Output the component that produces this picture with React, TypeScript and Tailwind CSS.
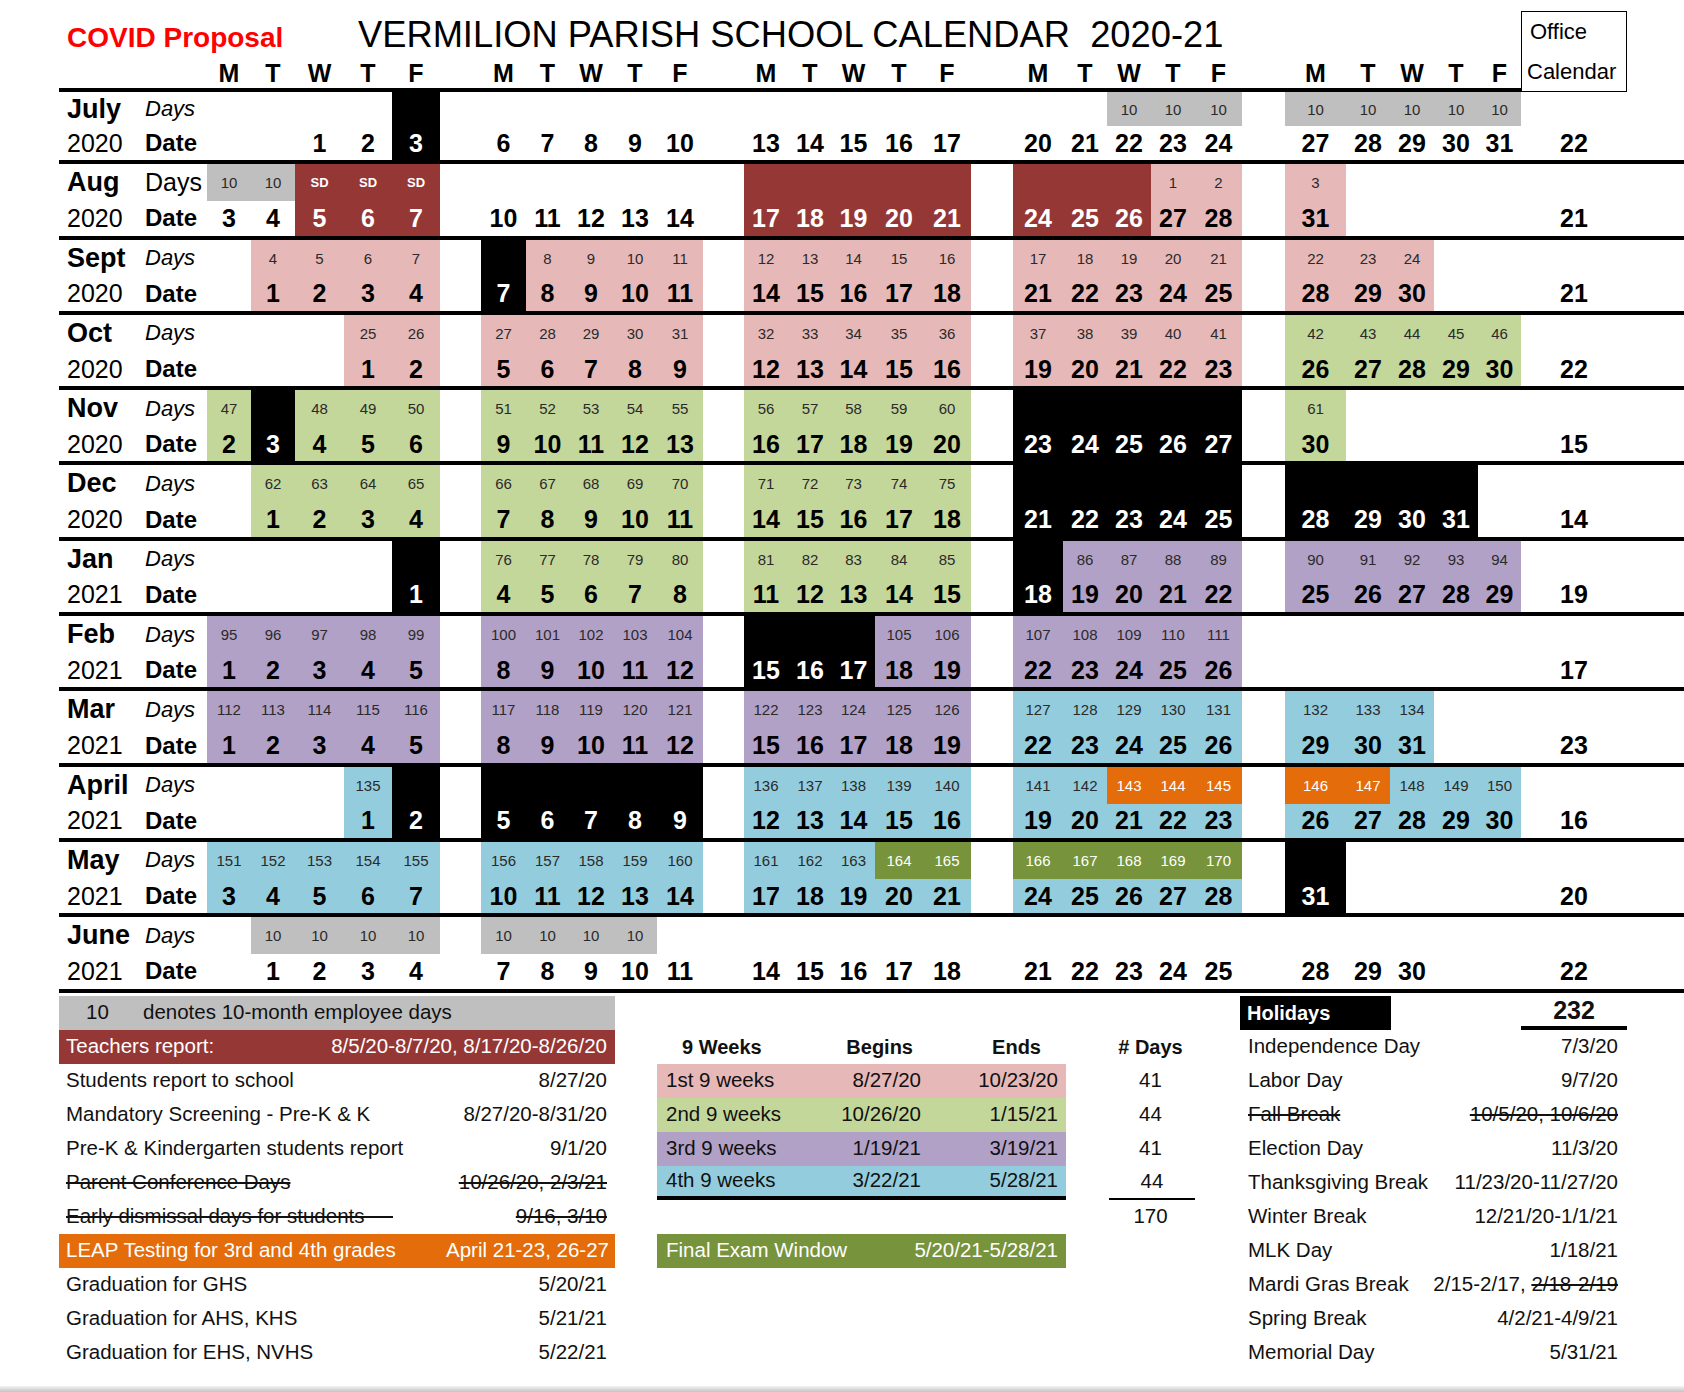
import React from 'react'

// colour keys used in the month strings
const BG: Record<string, string> = {
  '.': 'bg-white',
  k: 'bg-black',
  r: 'bg-[#953735]',
  p: 'bg-[#e6b9b8]',
  g: 'bg-[#c4d79b]',
  u: 'bg-[#b2a1c7]',
  b: 'bg-[#93cddd]',
  o: 'bg-[#e46c0a]',
  v: 'bg-[#77933c]',
  y: 'bg-[#bfbfbf]',
}
const DARK = 'krov'

const CW = [
  'w-[44px]', 'w-[44px]', 'w-[49px]', 'w-[48px]', 'w-[48px]',
  'w-[45px]', 'w-[43px]', 'w-[44px]', 'w-[44px]', 'w-[46px]',
  'w-[44px]', 'w-[44px]', 'w-[43px]', 'w-[48px]', 'w-[48px]',
  'w-[50px]', 'w-[44px]', 'w-[44px]', 'w-[44px]', 'w-[47px]',
  'w-[61px]', 'w-[44px]', 'w-[44px]', 'w-[44px]', 'w-[43px]',
]
const GAPS = ['w-[41px]', 'w-[41px]', 'w-[42px]', 'w-[43px]']

const cols = (s: string) => s.replace(/\s/g, '')
const parse = (s: string) =>
  s.split(/\s+/).filter(x => x && x !== '/').map(x => (x === '-' ? '' : x))

type Month = {
  name: string
  year: string
  upright?: boolean
  office: string
  dc: string
  dt: string
  ac?: string
  at: string
}

const MONTHS: Month[] = [
  {
    name: 'July', year: '2020', office: '22',
    dc: '....k ..... ..... ..yyy yyyyy',
    dt: '- - - - - / - - - - - / - - - - - / - - 10 10 10 / 10 10 10 10 10',
    ac: '....k ..... ..... ..... .....',
    at: '- - 1 2 3 / 6 7 8 9 10 / 13 14 15 16 17 / 20 21 22 23 24 / 27 28 29 30 31',
  },
  {
    name: 'Aug', year: '2020', office: '21', upright: true,
    dc: 'yyrrr ..... rrrrr rrrpp p....',
    dt: '10 10 SD SD SD / - - - - - / - - - - - / - - - 1 2 / 3 - - - -',
    ac: '..rrr ..... rrrrr rrrpp p....',
    at: '3 4 5 6 7 / 10 11 12 13 14 / 17 18 19 20 21 / 24 25 26 27 28 / 31 - - - -',
  },
  {
    name: 'Sept', year: '2020', office: '21',
    dc: '.pppp kpppp ppppp ppppp ppp..',
    dt: '- 4 5 6 7 / - 8 9 10 11 / 12 13 14 15 16 / 17 18 19 20 21 / 22 23 24 - -',
    at: '- 1 2 3 4 / 7 8 9 10 11 / 14 15 16 17 18 / 21 22 23 24 25 / 28 29 30 - -',
  },
  {
    name: 'Oct', year: '2020', office: '22',
    dc: '...pp ppppp ppppp ppppp ggggg',
    dt: '- - - 25 26 / 27 28 29 30 31 / 32 33 34 35 36 / 37 38 39 40 41 / 42 43 44 45 46',
    at: '- - - 1 2 / 5 6 7 8 9 / 12 13 14 15 16 / 19 20 21 22 23 / 26 27 28 29 30',
  },
  {
    name: 'Nov', year: '2020', office: '15',
    dc: 'gkggg ggggg ggggg kkkkk g....',
    dt: '47 - 48 49 50 / 51 52 53 54 55 / 56 57 58 59 60 / - - - - - / 61 - - - -',
    at: '2 3 4 5 6 / 9 10 11 12 13 / 16 17 18 19 20 / 23 24 25 26 27 / 30 - - - -',
  },
  {
    name: 'Dec', year: '2020', office: '14',
    dc: '.gggg ggggg ggggg kkkkk kkkk.',
    dt: '- 62 63 64 65 / 66 67 68 69 70 / 71 72 73 74 75 / - - - - - / - - - - -',
    at: '- 1 2 3 4 / 7 8 9 10 11 / 14 15 16 17 18 / 21 22 23 24 25 / 28 29 30 31 -',
  },
  {
    name: 'Jan', year: '2021', office: '19',
    dc: '....k ggggg ggggg kuuuu uuuuu',
    dt: '- - - - - / 76 77 78 79 80 / 81 82 83 84 85 / - 86 87 88 89 / 90 91 92 93 94',
    at: '- - - - 1 / 4 5 6 7 8 / 11 12 13 14 15 / 18 19 20 21 22 / 25 26 27 28 29',
  },
  {
    name: 'Feb', year: '2021', office: '17',
    dc: 'uuuuu uuuuu kkkuu uuuuu .....',
    dt: '95 96 97 98 99 / 100 101 102 103 104 / - - - 105 106 / 107 108 109 110 111 / - - - - -',
    at: '1 2 3 4 5 / 8 9 10 11 12 / 15 16 17 18 19 / 22 23 24 25 26 / - - - - -',
  },
  {
    name: 'Mar', year: '2021', office: '23',
    dc: 'uuuuu uuuuu uuuuu bbbbb bbb..',
    dt: '112 113 114 115 116 / 117 118 119 120 121 / 122 123 124 125 126 / 127 128 129 130 131 / 132 133 134 - -',
    at: '1 2 3 4 5 / 8 9 10 11 12 / 15 16 17 18 19 / 22 23 24 25 26 / 29 30 31 - -',
  },
  {
    name: 'April', year: '2021', office: '16',
    dc: '...bk kkkkk bbbbb bbooo oobbb',
    dt: '- - - 135 - / - - - - - / 136 137 138 139 140 / 141 142 143 144 145 / 146 147 148 149 150',
    ac: '...bk kkkkk bbbbb bbbbb bbbbb',
    at: '- - - 1 2 / 5 6 7 8 9 / 12 13 14 15 16 / 19 20 21 22 23 / 26 27 28 29 30',
  },
  {
    name: 'May', year: '2021', office: '20',
    dc: 'bbbbb bbbbb bbbvv vvvvv k....',
    dt: '151 152 153 154 155 / 156 157 158 159 160 / 161 162 163 164 165 / 166 167 168 169 170 / - - - - -',
    ac: 'bbbbb bbbbb bbbbb bbbbb k....',
    at: '3 4 5 6 7 / 10 11 12 13 14 / 17 18 19 20 21 / 24 25 26 27 28 / 31 - - - -',
  },
  {
    name: 'June', year: '2021', office: '22',
    dc: '.yyyy yyyy. ..... ..... .....',
    dt: '- 10 10 10 10 / 10 10 10 10 - / - - - - - / - - - - - / - - - - -',
    ac: '..... ..... ..... ..... .....',
    at: '- 1 2 3 4 / 7 8 9 10 11 / 14 15 16 17 18 / 21 22 23 24 25 / 28 29 30 - -',
  },
]

function Cells({ colors, texts, big }: { colors: string; texts: string[]; big: boolean }) {
  const out: React.ReactNode[] = []
  for (let w = 0; w < 5; w++) {
    for (let d = 0; d < 5; d++) {
      const i = w * 5 + d
      const c = colors[i] ?? '.'
      const dark = DARK.includes(c)
      const t = texts[i] ?? ''
      let txt = big ? 'text-[25px] font-bold' : 'text-[15px]'
      if (t === 'SD') txt = 'text-[13px] font-bold'
      const fg = dark ? 'text-white' : big ? 'text-black' : 'text-[#2a2a2a]'
      out.push(
        <div key={i} className={`${CW[i]} ${BG[c]} ${txt} ${fg} flex items-center justify-center leading-none`}>
          {t}
        </div>
      )
    }
    if (w < 4) out.push(<div key={`g${w}`} className={GAPS[w]} />)
  }
  return <>{out}</>
}

function MonthBlock({ m, first }: { m: Month; first: boolean }) {
  const dc = cols(m.dc)
  const ac = cols(m.ac ?? m.dc)
  return (
    <div className="border-b-4 border-black">
      <div className={`flex ${first ? 'h-[34px]' : 'h-[37px]'}`}>
        <div className="w-[86px] pl-[8px] flex items-center text-[27px] font-bold leading-none">{m.name}</div>
        <div className={`w-[62px] flex items-center leading-none ${m.upright ? 'text-[25px]' : 'text-[22px] italic'}`}>
          Days
        </div>
        <Cells colors={dc} texts={parse(m.dt)} big={false} />
        <div className="w-[106px]" />
      </div>
      <div className="flex h-[34.3px]">
        <div className="w-[86px] pl-[8px] flex items-center text-[25px] leading-none">{m.year}</div>
        <div className="w-[62px] flex items-center text-[24px] font-bold leading-none">Date</div>
        <Cells colors={ac} texts={parse(m.at)} big={true} />
        <div className="w-[106px] flex items-center justify-center text-[25px] font-bold leading-none">{m.office}</div>
      </div>
    </div>
  )
}

function HeaderLetters() {
  const out: React.ReactNode[] = []
  const L = ['M', 'T', 'W', 'T', 'F']
  for (let w = 0; w < 5; w++) {
    for (let d = 0; d < 5; d++) {
      const i = w * 5 + d
      out.push(
        <div key={i} className={`${CW[i]} flex items-center justify-center`}>
          {L[d]}
        </div>
      )
    }
    if (w < 4) out.push(<div key={`g${w}`} className={GAPS[w]} />)
  }
  return <>{out}</>
}

function LRow({ left, right, className = '' }: { left: React.ReactNode; right?: React.ReactNode; className?: string }) {
  return (
    <div className={`h-[34px] flex items-center justify-between pl-[7px] pr-[8px] ${className}`}>
      <span>{left}</span>
      <span>{right}</span>
    </div>
  )
}

function NineRow({ label, begins, ends, className }: { label: string; begins: string; ends: string; className: string }) {
  return (
    <div className={`h-[34px] flex items-center ${className}`}>
      <div className="w-[170px] pl-[9px]">{label}</div>
      <div className="w-[94px] text-right">{begins}</div>
      <div className="flex-1 text-right pr-[8px]">{ends}</div>
    </div>
  )
}

const HOLIDAYS: [React.ReactNode, React.ReactNode][] = [
  ['Independence Day', '7/3/20'],
  ['Labor Day', '9/7/20'],
  [<span className="line-through">Fall Break</span>, <span className="line-through">10/5/20, 10/6/20</span>],
  ['Election Day', '11/3/20'],
  ['Thanksgiving Break', '11/23/20-11/27/20'],
  ['Winter Break', '12/21/20-1/1/21'],
  ['MLK Day', '1/18/21'],
  ['Mardi Gras Break', <>2/15-2/17, <span className="line-through">2/18-2/19</span></>],
  ['Spring Break', '4/2/21-4/9/21'],
  ['Memorial Day', '5/31/21'],
]

export default function App() {
  return (
    <div className="w-[1684px] h-[1392px] bg-white text-black font-['Liberation_Sans',Arial,sans-serif] flex flex-col overflow-hidden">
      <div className="pl-[59px] flex-1">
        {/* Title + weekday header */}
        <div className="flex">
          <div className="w-[1462px]">
            <div className="h-[56px] flex items-baseline pt-[17px] leading-none">
              <div className="w-[299px] pl-[8px] text-[28px] font-bold text-[#ff0000]">COVID Proposal</div>
              <div className="text-[36.3px] whitespace-pre">VERMILION PARISH SCHOOL CALENDAR  2020-21</div>
            </div>
            <div className="h-[36px] flex items-center pt-[2px] border-b-4 border-black text-[25px] font-bold leading-none">
              <div className="w-[148px]" />
              <HeaderLetters />
            </div>
          </div>
          <div className="w-[106px] mt-[11px] h-[81px] border-[1.5px] border-black flex flex-col justify-center pl-[5px] text-[22px] leading-[40px]">
            <div className="pl-[3px]">Office</div>
            <div>Calendar</div>
          </div>
        </div>

        {/* Months */}
        <div>
          {MONTHS.map((m, i) => (
            <MonthBlock key={m.name} m={m} first={i === 0} />
          ))}
        </div>

        {/* Legend */}
        <div className="flex mt-[3px] text-[20.5px] leading-none">
          <div className="w-[556px] text-[#111]">
            <div className="h-[34px] flex items-center bg-[#bfbfbf]">
              <span className="w-[84px] pl-[27px]">10</span>
              <span>denotes 10-month employee days</span>
            </div>
            <LRow className="bg-[#953735] text-white" left="Teachers report:" right="8/5/20-8/7/20, 8/17/20-8/26/20" />
            <LRow left="Students report to school" right="8/27/20" />
            <LRow left="Mandatory Screening - Pre-K & K" right="8/27/20-8/31/20" />
            <LRow left="Pre-K & Kindergarten students report" right="9/1/20" />
            <LRow
              left={<span className="line-through">Parent Conference Days</span>}
              right={<span className="line-through">10/26/20, 2/3/21</span>}
            />
            <LRow
              left={<span className="line-through">Early dismissal days for students&nbsp;&nbsp;&nbsp;&nbsp;&nbsp;</span>}
              right={<span className="line-through">9/16, 3/10</span>}
            />
            <LRow className="bg-[#e46c0a] text-white !pr-[6px]" left="LEAP Testing for 3rd and 4th grades" right="April 21-23, 26-27" />
            <LRow left="Graduation for GHS" right="5/20/21" />
            <LRow left="Graduation for AHS, KHS" right="5/21/21" />
            <LRow left="Graduation for EHS, NVHS" right="5/22/21" />
          </div>

          <div className="w-[42px]" />

          <div className="w-[409px] text-[#111]">
            <div className="h-[34px]" />
            <div className="h-[34px] flex items-center font-bold text-[20px]">
              <div className="w-[170px] pl-[25px]">9 Weeks</div>
              <div className="w-[94px] text-right pr-[8px]">Begins</div>
              <div className="flex-1 text-right pr-[25px]">Ends</div>
            </div>
            <NineRow className="bg-[#e6b9b8]" label="1st 9 weeks" begins="8/27/20" ends="10/23/20" />
            <NineRow className="bg-[#c4d79b]" label="2nd 9 weeks" begins="10/26/20" ends="1/15/21" />
            <NineRow className="bg-[#b2a1c7]" label="3rd 9 weeks" begins="1/19/21" ends="3/19/21" />
            <NineRow className="bg-[#93cddd] border-b-4 border-black" label="4th 9 weeks" begins="3/22/21" ends="5/28/21" />
            <div className="h-[34px]" />
            <div className="h-[34px] flex items-center justify-between bg-[#77933c] text-white pl-[9px] pr-[8px]">
              <span>Final Exam Window</span>
              <span>5/20/21-5/28/21</span>
            </div>
          </div>

          <div className="w-[40px]" />

          <div className="w-[89px] text-[#111] text-center">
            <div className="h-[34px]" />
            <div className="h-[34px] flex items-center justify-center font-bold text-[20px]">#&nbsp;Days</div>
            <div className="h-[34px] flex items-center justify-center">41</div>
            <div className="h-[34px] flex items-center justify-center">44</div>
            <div className="h-[34px] flex items-center justify-center">41</div>
            <div className="h-[34px] flex items-center justify-center border-b-2 border-black ml-[3px]">44</div>
            <div className="h-[34px] flex items-center justify-center">170</div>
          </div>

          <div className="w-[45px]" />

          <div className="w-[387px] text-[#111]">
            <div className="h-[34px] flex items-stretch">
              <div className="w-[151px] bg-black text-white font-bold flex items-center pl-[7px] text-[20px]">Holidays</div>
              <div className="flex-1" />
              <div className="w-[106px] flex items-center justify-center text-[25px] font-bold border-b-4 border-black">232</div>
            </div>
            {HOLIDAYS.map(([l, r], i) => (
              <div key={i} className="h-[34px] flex items-center justify-between pl-[8px] pr-[9px]">
                <span>{l}</span>
                <span>{r}</span>
              </div>
            ))}
          </div>
        </div>
      </div>
      <div className="h-[6px] bg-gradient-to-b from-[#f4f4f4] to-[#c4c4c4]" />
    </div>
  )
}
